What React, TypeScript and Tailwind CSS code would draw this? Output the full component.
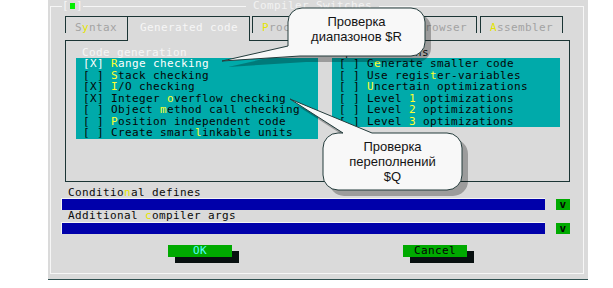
import React from "react";

function Hot({ t, hk }: { t: string; hk: string }) {
  const parts = t.split("~");
  return (
    <>
      {parts.map((p, i) =>
        i % 2 === 1 ? (
          <span key={i} className={hk}>
            {p}
          </span>
        ) : (
          <span key={i}>{p}</span>
        )
      )}
    </>
  );
}

const leftRows = [
  "[X] ~R~ange checking",
  "[ ] ~S~tack checking",
  "[X] ~I~/O checking",
  "[X] Integer ~o~verflow checking",
  "[ ] Object ~m~ethod call checking",
  "[ ] ~P~osition independent code",
  "[ ] Create smart~l~inkable units",
];

const rightRows = [
  "[ ] G~e~nerate smaller code",
  "[ ] Use regis~t~er-variables",
  "[ ] ~U~ncertain optimizations",
  "[ ] Level ~1~ optimizations",
  "[ ] Level ~2~ optimizations",
  "[ ] Level ~3~ optimizations",
];

function InactiveTab({ label, w, ml, noRight }: { label: string; w: string; ml: string; noRight?: boolean }) {
  return (
    <div
      className={`${w} ${ml} h-[17px] border-t border-l ${noRight ? "" : "border-r"} border-[#1b3535] pl-[9px] pt-[5px] text-[#a3a3a3] whitespace-pre`}
    >
      <Hot t={label} hk="text-[#e4e400]" />
    </div>
  );
}

export default function App() {
  return (
    <div className="relative w-[613px] h-[288px] bg-white overflow-hidden font-['DejaVu_Sans_Mono',monospace] text-[11px] tracking-[0.38px] leading-[11.5px] text-[#0a0a0a]">
      {/* window */}
      <div className="ml-[48px] w-[540px] h-[280px] bg-[#dadada] border-b border-[#2f5050] pt-[6px] pl-[2px] pr-[4px] pb-[5px]">
        <div className="h-full border border-[#f6f6f6]">
          {/* title row */}
          <div className="-mt-[7px] h-[11.5px] flex items-start whitespace-pre">
            <div className="ml-[11px] w-[21px] h-[11.5px] bg-[#dadada] flex items-center justify-center text-[#f6f6f6]">
              <span>[</span>
              <span className="inline-block w-[6px] h-[6px] bg-[#00ee00] mx-[1px]" />
              <span>]</span>
            </div>
            <div className="ml-[163px] bg-[#dadada] text-[#f2f2f2]"> Compiler Switches </div>
          </div>

          {/* tabs */}
          <div className="mt-[4.5px] ml-[14px] h-[24px] flex items-start">
            <InactiveTab label="S~y~ntax" w="w-[62px]" ml="ml-0" noRight />
            <div className="relative z-10 w-[123px] h-[25px] border-t border-l border-r border-[#1b3535] bg-[#dadada] pl-[12px] pt-[5px] text-[#f6f6f6] whitespace-pre">
              Generated code
            </div>
            <InactiveTab label="~P~rocessor" w="w-[83px]" ml="ml-[2px]" />
            <InactiveTab label="~V~erbose" w="w-[69px]" ml="ml-[2px]" />
            <InactiveTab label="~B~rowser" w="w-[69px]" ml="ml-[2px]" />
            <InactiveTab label="~A~ssembler" w="w-[83px]" ml="ml-[3px]" />
          </div>

          {/* panel */}
          <div className="ml-[14px] w-[505px] h-[142px] border border-[#1b3535] flex items-start">
            <div className="ml-[10px] w-[242px] pt-[5.5px]">
              <div className="pl-[6px] h-[11.5px] text-[#f6f6f6]">Code generation</div>
              <div className="bg-[#00aaaa] pl-[7px] whitespace-pre">
                {leftRows.map((r, i) => (
                  <div key={i} className={i === 0 ? "h-[11.5px] text-white" : "h-[11.5px] text-[#050505]"}>
                    <Hot t={r} hk="text-[#ffff30]" />
                  </div>
                ))}
              </div>
            </div>
            <div className="ml-[14px] w-[228px] pt-[5.5px]">
              <div className="pl-[6px] h-[11.5px] text-[#101010]">Optimizations</div>
              <div className="bg-[#00aaaa] pl-[7px] whitespace-pre">
                {rightRows.map((r, i) => (
                  <div key={i} className="h-[11.5px] text-[#050505]">
                    <Hot t={r} hk="text-[#ffff30]" />
                  </div>
                ))}
              </div>
            </div>
          </div>

          {/* inputs */}
          <div className="mt-[4.5px] ml-[17px] h-[11.5px] whitespace-pre">
            <Hot t="Conditio~n~al defines" hk="text-[#e4e400]" />
          </div>
          <div className="flex items-start h-[12px]">
            <div className="ml-[10px] w-[484px] h-[12px] border-t border-l border-[#f4f4f4] bg-[#0000aa]" />
            <div className="ml-[11px] mt-[1px] w-[14px] h-[11px] bg-[#00aa00] flex items-center justify-center text-[#050505] font-bold leading-none">
              v
            </div>
          </div>
          <div className="ml-[17px] h-[11.5px] whitespace-pre">
            <Hot t="Additional ~c~ompiler args" hk="text-[#e4e400]" />
          </div>
          <div className="flex items-start h-[12px]">
            <div className="ml-[10px] w-[484px] h-[12px] border-t border-l border-[#f4f4f4] bg-[#0000aa]" />
            <div className="ml-[11px] mt-[1px] w-[14px] h-[11px] bg-[#00aa00] flex items-center justify-center text-[#050505] font-bold leading-none">
              v
            </div>
          </div>

          {/* buttons */}
          <div className="mt-[11.5px] flex items-start">
            <div className="ml-[117px] w-[64px] h-[12px] bg-[#00aa00] shadow-[7px_6px_0_0_#081010] text-center text-[#55ffff]">
              OK
            </div>
            <div className="ml-[171px] w-[64px] h-[12px] bg-[#00aa00] shadow-[7px_6px_0_0_#081010] text-center text-[#050505]">
              Cancel
            </div>
          </div>
        </div>
      </div>

      {/* callouts */}
      <svg className="absolute left-0 top-0 pointer-events-none" width="613" height="288" viewBox="0 0 613 288">
        <g opacity="0.28" transform="translate(6 6)">
          <path
            d="M302 8 H411 A14 14 0 0 1 425 22 V42 A14 14 0 0 1 411 56 H300 L222 61 L288 46 V22 A14 14 0 0 1 302 8 Z"
            fill="#000"
          />
          <path
            d="M338 133 L343 133 L290 99 L372 133 H447 A15 15 0 0 1 462 148 V175 A15 15 0 0 1 447 190 H338 A15 15 0 0 1 323 175 V148 A15 15 0 0 1 338 133 Z"
            fill="#000"
          />
        </g>
        <path
          d="M302 8 H411 A14 14 0 0 1 425 22 V42 A14 14 0 0 1 411 56 H300 L222 61 L288 46 V22 A14 14 0 0 1 302 8 Z"
          fill="#f8f8f8"
          stroke="#243c3c"
          strokeWidth="1"
        />
        <path
          d="M338 133 L343 133 L290 99 L372 133 H447 A15 15 0 0 1 462 148 V175 A15 15 0 0 1 447 190 H338 A15 15 0 0 1 323 175 V148 A15 15 0 0 1 338 133 Z"
          fill="#f8f8f8"
          stroke="#243c3c"
          strokeWidth="1"
        />
      </svg>
      <div className="absolute left-[288px] top-[13.5px] w-[137px] text-center font-['Liberation_Sans',Arial,sans-serif] text-[13px] leading-[15px] tracking-normal text-[#141414]">
        <div>Проверка</div>
        <div>диапазонов $R</div>
      </div>
      <div className="absolute left-[323px] top-[138.5px] w-[139px] text-center font-['Liberation_Sans',Arial,sans-serif] text-[13px] leading-[15px] tracking-normal text-[#141414]">
        <div>Проверка</div>
        <div>переполнений</div>
        <div>$Q</div>
      </div>
    </div>
  );
}
